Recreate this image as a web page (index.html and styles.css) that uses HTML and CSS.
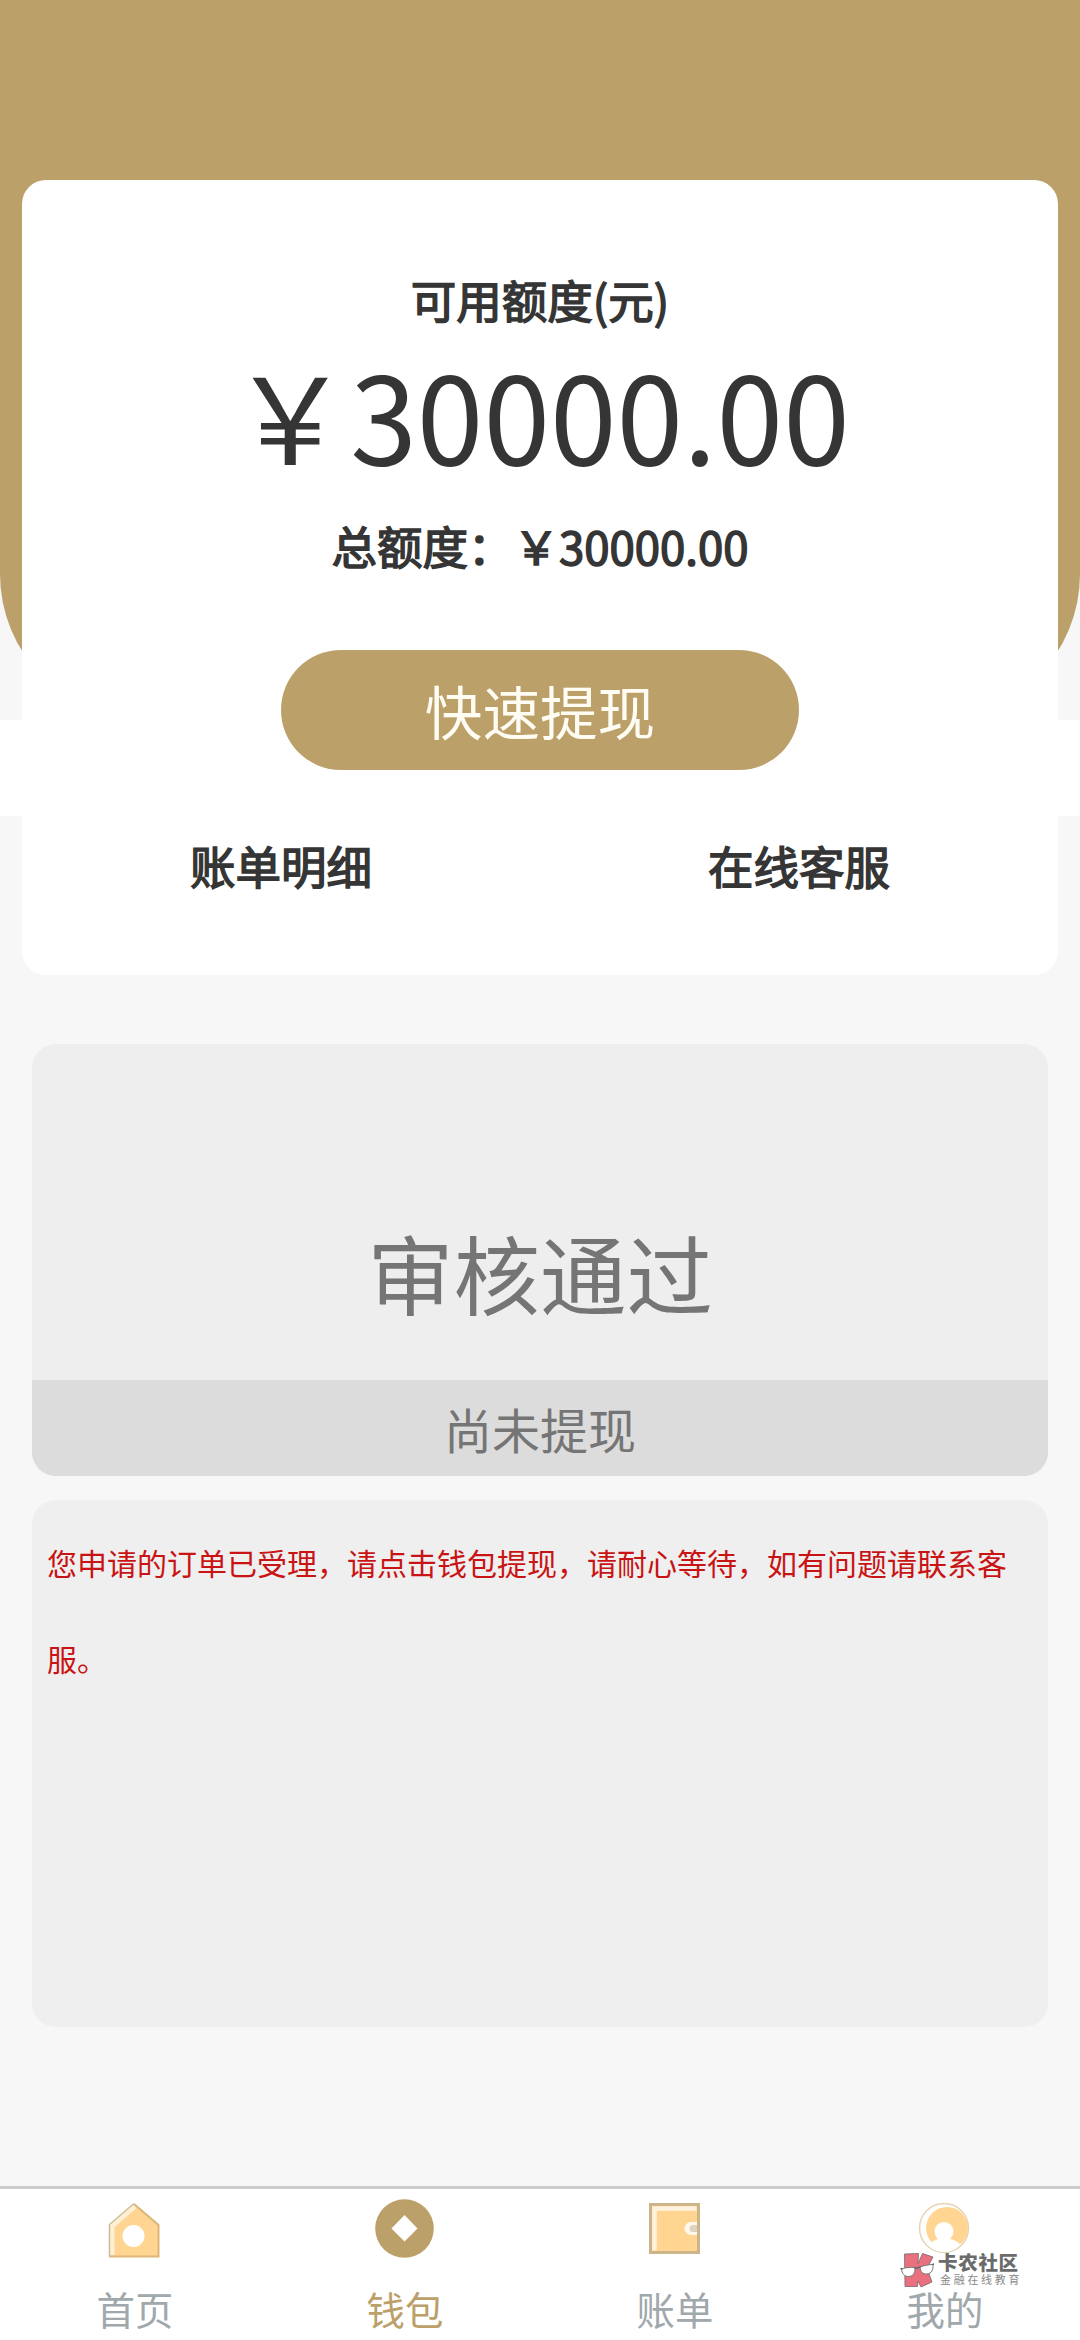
FILE: index.html
```html
<!DOCTYPE html>
<html lang="zh-CN">
<head>
<meta charset="utf-8">
<title>钱包</title>
<link rel="stylesheet" href="styles.css">
</head>
<body>
<main class="content">
  <section class="wallet">
    <div class="backdrop"><div class="backdrop-base"><div class="backdrop-gold"></div></div></div>
    <div class="card">
      <div class="label">可用额度(元)</div>
      <div class="amount">&#xFFE5;30000.00</div>
      <div class="total">总额度&#xFF1A;&#xFFE5;30000.00</div>
      <button class="withdraw">快速提现</button>
      <div class="links"><a>账单明细</a><a>在线客服</a></div>
    </div>
  </section>
  <section class="status">
    <div class="status-title">审核通过</div>
    <div class="status-sub">尚未提现</div>
  </section>
  <section class="notice">您申请的订单已受理&#xFF0C;请点击钱包提现&#xFF0C;请耐心等待&#xFF0C;如有问题请联系客服。</section>
</main>
<nav class="tabs">
  <a class="tab">
    <svg class="icon" viewBox="0 0 60 60"><path d="M5 58V26L29 5l25 21v32z" fill="#ffd591"/><path d="M7 56V27L30 7" fill="none" stroke="#fff0d4" stroke-width="5"/><path d="M4.500 58V25.500L29 4.500" fill="none" stroke="#cdbd98" stroke-width="1.500"/><path d="M29 5l24.500 21v31.500H4.500" fill="none" stroke="#dcb778" stroke-width="2"/><circle cx="28.500" cy="37" r="11" fill="#fff"/></svg>
    <span>首页</span>
  </a>
  <a class="tab active">
    <svg class="icon" viewBox="0 0 60 60"><circle cx="29.500" cy="29.500" r="29.300" fill="#bca06a"/><path d="M29.500 16l13 13.500-13 13-13-13z" fill="#fff"/></svg>
    <span>钱包</span>
  </a>
  <a class="tab">
    <svg class="icon" viewBox="0 0 60 60"><path d="M5.500 5.500h48v48h-48z" fill="#ffd591" stroke="#cdb58a" stroke-width="3"/><path d="M9.500 51.500v-42h42" fill="none" stroke="#fff3df" stroke-width="4.500"/><path d="M52 23h-6a6.500 6.500 0 0 0 0 13h6z" fill="#fff8ec"/><path d="M52 26h-4a3.500 3.500 0 0 0 0 7h4z" fill="#ddd3c0"/></svg>
    <span>账单</span>
  </a>
  <a class="tab">
    <svg class="icon" viewBox="0 0 60 60"><circle cx="29" cy="29" r="24.500" fill="#fff" stroke="#e6d3b4" stroke-width="1.500"/><circle cx="32" cy="29" r="21" fill="#ffd591"/><path d="M14 47c3-5 7-7 10-7h9c5 0 9 2 12 5-7 10-22 11-31 2z" fill="#fff"/><circle cx="29" cy="32.500" r="9.500" fill="#fff"/></svg>
    <span>我的</span>
  </a>
</nav>
<div class="watermark">
  <svg class="mark" viewBox="0 0 36 36"><path d="M4.500 2L18.500 1.500l-.5 10L22.500 1.500l10.500 3.500-6 11.500 5 13.500-11 5-3-6-.5 5.500H5z" fill="#e8707f" stroke="#77666a" stroke-width=".8"/><g fill="#fff" stroke="#777" stroke-width="1"><path d="M1.500 17c4-1.500 9-2 13.500-1.500.5 5.500-2 9-6.500 9s-6.500-3-7-7.500z"/><path d="M20 15c4-1.500 9-2.500 13-2.500.5 5.500-1.500 9-6 9.500-4.500.3-6.500-2-7-7z"/></g><path d="M.5 16.500l2 .5M14.500 16.500l6-1.500M32.500 12.500l1.500-.5" stroke="#666" stroke-width="1.500"/></svg>
  <div><div class="mark-name">卡农社区</div><div class="mark-sub">金融在线教育</div></div>
</div>
</body>
</html>
```
FILE: styles.css
```css
* { box-sizing: border-box; }
body {
  margin: 0;
  width: 1080px;
  height: 2340px;
  display: flex;
  flex-direction: column;
  background: #f7f7f7;
  color: #353535;
  font-family: "Noto Sans CJK SC", sans-serif;
  overflow: hidden;
}
.content { flex: 1; }
.wallet { display: grid; }
.backdrop, .card { grid-area: 1 / 1; }
.backdrop { height: 816px; background: #fff; }
.backdrop-base { height: 720px; background: #f7f7f7; }
.backdrop-gold {
  height: 720px;
  background: #bca06a;
  border-radius: 0 0 146px 146px;
}
.card {
  margin: 180px 22px 0;
  height: 795px;
  padding-top: 70px;
  border-radius: 24px;
  background: #fff;
  text-align: center;
}
.label, .total, .links {
  font-size: 45.500px;
  -webkit-text-stroke: 1.500px #353535;
}
.label { line-height: 96px; padding-top: 1px; }
.amount { font-size: 120px; line-height: 132px; }
.total { line-height: 133px; }
.withdraw {
  display: block;
  width: 518px;
  height: 120px;
  margin: 38px auto 0;
  padding: 0;
  border: 0;
  border-radius: 60px;
  background: #bca06a;
  color: #fffdf3;
  font: 57.600px/120px "Noto Sans CJK SC", sans-serif;
}
.links {
  display: grid;
  grid-template-columns: 1fr 1fr;
  margin-top: 47px;
  line-height: 96px;
}
.status {
  margin: 69px 32px 0;
  height: 432px;
  display: flex;
  flex-direction: column;
  justify-content: flex-end;
  border-radius: 24px;
  overflow: hidden;
  background: #eee;
  color: #757575;
  text-align: center;
}
.status-title { font-size: 86.400px; line-height: 216px; }
.status-sub { font-size: 48px; line-height: 96px; background: #dcdcdc; }
.notice {
  margin: 24px 32px 0;
  height: 527px;
  padding: 14px 15px;
  border-radius: 24px;
  background: #efefef;
  color: #c81414;
  font-size: 30px;
  line-height: 96px;
}
.tabs {
  height: 154px;
  display: grid;
  grid-template-columns: repeat(4, 1fr);
  border-top: 3px solid #ccc;
  background: #fff;
  color: #a0a8ab;
  font-size: 38.400px;
}
.tab {
  display: flex;
  flex-direction: column;
  align-items: center;
  padding-top: 10px;
  line-height: 58px;
}
.tab span { margin-top: 20px; }
.icon { width: 60px; height: 60px; }
.active { color: #bca06a; }
.watermark {
  position: absolute;
  left: 900px;
  top: 2252px;
  display: flex;
  gap: 2px;
  color: #6c6c6c;
  white-space: nowrap;
}
.mark { width: 36px; height: 36px; }
.mark-name { font-size: 19.500px; line-height: 20px; font-weight: 900; letter-spacing: .7px; }
.mark-sub { font-size: 11px; line-height: 14px; letter-spacing: 2.700px; color: #888; padding-left: 2px; }
```
